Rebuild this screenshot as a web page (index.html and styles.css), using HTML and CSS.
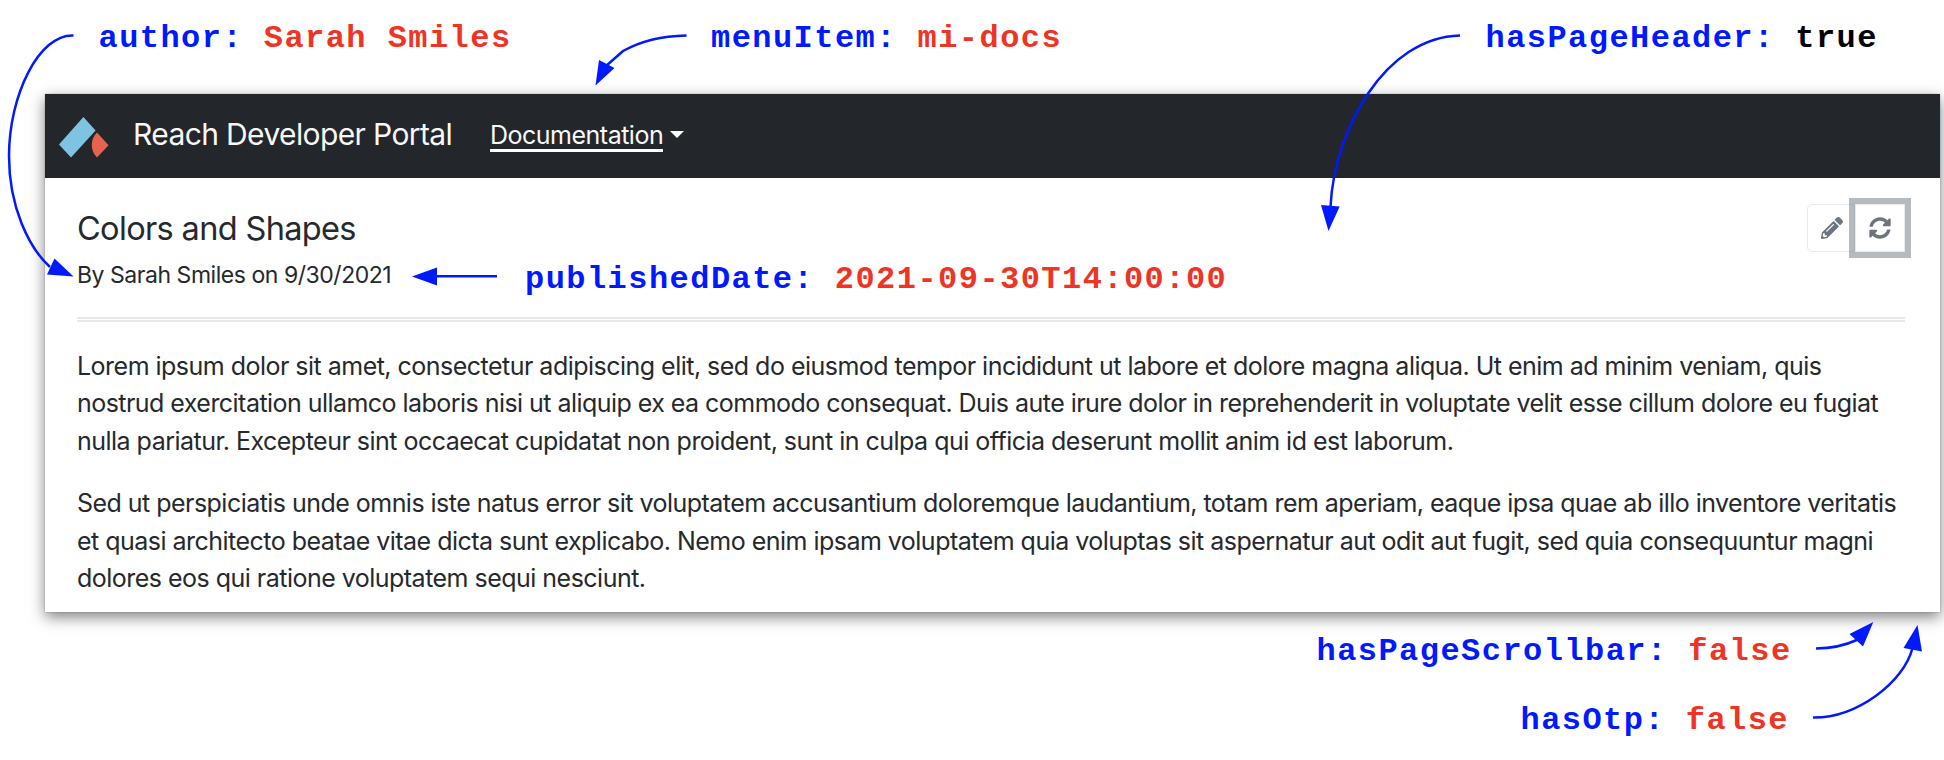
FILE: index.html
```
<!DOCTYPE html>
<html lang="en">
<head>
<meta charset="utf-8">
<title>Reach Developer Portal</title>
<link rel="stylesheet" href="styles.css">
</head>
<body>
<main class="card">
  <header class="navbar">
    <svg class="logo" viewBox="0 0 50 41" aria-hidden="true">
      <path fill="#7fc3e3" d="M0 27.6 24.4 0 36.6 13.6 12 40.5z"/>
      <path fill="#e5634f" d="M38 15.6 49.6 28.2 38 40.5C31 34 31 22 38 15.6z"/>
    </svg>
    <span class="brand">Reach Developer Portal</span>
    <a class="menu"><span class="menu-label">Documentation</span><i class="caret"></i></a>
  </header>
  <section class="content">
    <div class="page-header">
      <div class="heading">
        <h1>Colors and Shapes</h1>
        <div class="byline">By Sarah Smiles on 9/30/2021</div>
      </div>
      <div class="buttons">
        <button class="btn edit" aria-label="Edit"><svg viewBox="0 0 512 512"><path d="M497.9 142.1l-46.1 46.1c-4.7 4.7-12.3 4.7-17 0l-111-111c-4.7-4.7-4.7-12.3 0-17l46.1-46.1c18.7-18.7 49.1-18.7 67.9 0l60.1 60.1c18.8 18.7 18.8 49.1 0 67.9zM284.2 99.8L21.6 362.4.4 483.9c-2.9 16.4 11.4 30.6 27.8 27.8l121.5-21.3 262.6-262.6c4.7-4.7 4.7-12.3 0-17l-111-111c-4.8-4.7-12.4-4.7-17.1 0zM124.1 339.9c-5.5-5.5-5.5-14.3 0-19.8l154-154c5.5-5.5 14.3-5.5 19.8 0s5.5 14.3 0 19.8l-154 154c-5.5 5.5-14.3 5.5-19.8 0zM88 424h48v36.3l-64.5 11.3-31.1-31.1L51.7 376H88v48z"/></svg></button>
        <button class="btn refresh" aria-label="Refresh"><svg viewBox="0 0 512 512"><path d="M370.72 133.28C339.458 104.008 298.888 87.962 255.848 88c-77.458.068-144.328 53.178-162.791 126.85-1.344 5.363-6.122 9.15-11.651 9.15H24.103c-7.498 0-13.194-6.807-11.807-14.176C33.933 94.924 134.813 8 256 8c66.448 0 126.791 26.136 171.315 68.685L463.03 40.97C478.149 25.851 504 36.559 504 57.941V192c0 13.255-10.745 24-24 24H345.941c-21.382 0-32.09-25.851-16.971-40.971l41.75-41.749zM32 296h134.059c21.382 0 32.09 25.851 16.971 40.971l-41.75 41.75c31.262 29.273 71.835 45.319 114.876 45.28 77.418-.07 144.315-53.144 162.787-126.849 1.344-5.363 6.122-9.15 11.651-9.15h57.304c7.498 0 13.194 6.807 11.807 14.176C478.067 417.076 377.187 504 256 504c-66.448 0-126.791-26.136-171.315-68.685L48.97 471.03C33.851 486.149 8 475.441 8 454.059V320c0-13.255 10.745-24 24-24z"/></svg></button>
      </div>
    </div>
    <p>Lorem ipsum dolor sit amet, consectetur adipiscing elit, sed do eiusmod tempor incididunt ut labore et dolore magna aliqua. Ut enim ad minim veniam, quis<br><span class="l2">nostrud exercitation ullamco laboris nisi ut aliquip ex ea commodo consequat. Duis aute irure dolor in reprehenderit in voluptate velit esse cillum dolore eu fugiat</span><br>nulla pariatur. Excepteur sint occaecat cupidatat non proident, sunt in culpa qui officia deserunt mollit anim id est laborum.</p>
    <p><span class="l3">Sed ut perspiciatis unde omnis iste natus error sit voluptatem accusantium doloremque laudantium, totam rem aperiam, eaque ipsa quae ab illo inventore veritatis</span><br>et quasi architecto beatae vitae dicta sunt explicabo. Nemo enim ipsam voluptatem quia voluptas sit aspernatur aut odit aut fugit, sed quia consequuntur magni<br>dolores eos qui ratione voluptatem sequi nesciunt.</p>
  </section>
</main>

<div class="note author">author<i>:</i> <b>Sarah Smiles</b></div>
<div class="note menu-item">menuItem<i>:</i> <b>mi-docs</b></div>
<div class="note page-head">hasPageHeader<i>:</i> <b class="true">true</b></div>
<div class="note published">publishedDate<i>:</i> <b>2021-09-30T14:00:00</b></div>
<div class="note scrollbar">hasPageScrollbar<i>:</i> <b>false</b></div>
<div class="note otp">hasOtp<i>:</i> <b>false</b></div>

<svg class="arrows" viewBox="0 0 1944 760" aria-hidden="true">
  <g class="lines">
    <path d="M73.5 35.4C39 34 9 95 9 156C9 207 29 248 50 267"/>
    <path d="M686.5 35.4C658 36 637 43 623 51L606 66"/>
    <path d="M1460 35.4C1385 37 1334 130 1330.5 207"/>
    <path d="M497 276.3H436"/>
    <path d="M1816 648.5C1832 648.5 1846 645 1858 639.5"/>
    <path d="M1813 717.5C1857 718 1904 682 1912.5 648"/>
  </g>
  <g class="heads">
    <path d="M73.5 276.5 54.5 258.5 47 274.5z"/>
    <path d="M595.5 85.5 599 60 614.5 68z"/>
    <path d="M1328.5 231 1321 205 1339.7 206.5z"/>
    <path d="M412 276.5 437 267.5V285.5z"/>
    <path d="M1873.3 622 1849.5 634 1863 646.5z"/>
    <path d="M1917.5 625 1903.5 648 1922 651.5z"/>
  </g>
</svg>
</body>
</html>
```
FILE: styles.css
```
* { box-sizing: border-box; }
body {
  margin: 0;
  width: 1944px;
  height: 760px;
  padding: 94px 0 0 44.5px;
  overflow: hidden;
  position: relative;
  background: #fff;
  color: #25292d;
  font: 25px/37.5px Inter, "Open Sans", sans-serif;
}
.card {
  width: 1895.5px;
  height: 517.5px;
  background: #fff;
  box-shadow: 0 0 1px rgba(0,0,0,.4), 0 5px 14px rgba(0,0,0,.5);
}
.navbar {
  height: 84px;
  background: #23262b;
  display: flex;
  color: #f8f8f8;
  white-space: nowrap;
}
.logo { width: 50px; height: 41px; margin: 23px 0 0 14px; }
.brand {
  width: 357px;
  margin: 22px 0 0 24.5px;
  font-size: 30px;
  letter-spacing: -.62px;
}
.menu { display: flex; margin-top: 22.5px; letter-spacing: -.5px; }
.menu-label { height: 35.5px; width: 173px; border-bottom: 3px solid #fff; }
.caret {
  width: 0; height: 0;
  margin: 14px 0 0 6.5px;
  border: 7px solid transparent;
  border-top-color: #fff;
  border-bottom: 0;
}
.content { padding: 19px 35px 0 32.5px; }
.page-header {
  height: 125px;
  display: flex;
  justify-content: space-between;
  border-bottom: 5px double #e8e8e8;
}
.heading { padding-top: 12px; }
h1 {
  margin: 0 0 10px;
  font-size: 32.5px;
  line-height: 39px;
  font-weight: 400;
  letter-spacing: -.65px;
}
.byline { font-size: 23px; line-height: 34.5px; letter-spacing: -.46px; }
.buttons { display: flex; padding-top: 6.5px; }
.btn {
  height: 48px;
  padding: 0;
  background: #fff;
  border: 1.5px solid #e9eaeb;
  display: flex;
  align-items: center;
}
.btn svg { width: 22px; height: 22px; fill: #6c757d; }
.edit { width: 48px; border-radius: 5px 0 0 5px; padding-left: 13px; }
.refresh {
  width: 50px;
  justify-content: center;
  box-shadow: 0 0 0 6px rgba(108,117,125,.5);
}
p {
  margin: 25px 0 0;
  white-space: nowrap;
  letter-spacing: -.518px;
}
.page-header + p { margin-top: 25.5px; }
.l2 { letter-spacing: -.54px; }
.l3 { letter-spacing: -.532px; }
.note {
  position: absolute;
  font: bold 32px/40px "Liberation Mono", monospace;
  letter-spacing: 1.45px;
  color: #0019ff;
  white-space: pre;
}
.note i { font-style: normal; }
.note b { color: #ee3424; }
.note .true { color: #000; }
.author { left: 98.5px; top: 19px; }
.menu-item { left: 711px; top: 19px; }
.page-head { left: 1485.5px; top: 19px; }
.published { left: 525px; top: 260px; }
.scrollbar { left: 1316.5px; top: 632px; }
.otp { left: 1520.5px; top: 701px; }
.arrows { position: absolute; left: 0; top: 0; width: 1944px; height: 760px; pointer-events: none; }
.lines { fill: none; stroke: #0019ff; stroke-width: 2.5; }
.heads { fill: #0019ff; }
```
